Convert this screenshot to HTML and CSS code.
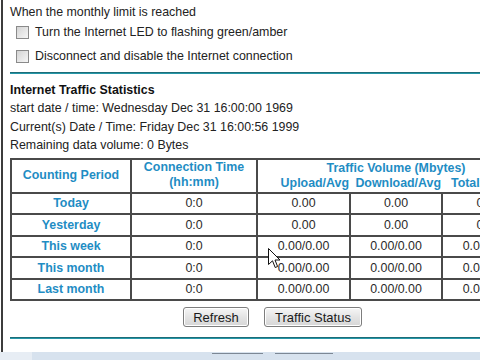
FILE: index.html
```html
<!DOCTYPE html>
<html>
<head>
<meta charset="utf-8">
<link rel="stylesheet" href="styles.css">
</head>
<body>
<div class="page">
  <div class="limit-title">When the monthly limit is reached</div>
  <div class="check-row"><span class="box"></span><span>Turn the Internet LED to flashing green/amber</span></div>
  <div class="check-row"><span class="box"></span><span>Disconnect and disable the Internet connection</span></div>
  <div class="rule"></div>
  <div class="section-title">Internet Traffic Statistics</div>
  <div class="info">start date / time: Wednesday Dec 31 16:00:00 1969</div>
  <div class="info">Current(s) Date / Time: Friday Dec 31 16:00:56 1999</div>
  <div class="info">Remaining data volume: 0 Bytes</div>
  <table class="stats">
    <colgroup>
      <col class="c1"><col class="c2"><col class="c3"><col class="c4"><col class="c5">
    </colgroup>
    <tr class="head1">
      <th rowspan="2" class="hc">Counting Period</th>
      <th rowspan="2" class="hc">Connection Time<br>(hh:mm)</th>
      <th colspan="3" class="tv">Traffic Volume (Mbytes)</th>
    </tr>
    <tr class="head2">
      <th class="sub first">Upload/Avg</th>
      <th class="sub mid">Download/Avg</th>
      <th class="sub last">Total/Avg</th>
    </tr>
    <tr><th>Today</th><td>0:0</td><td>0.00</td><td>0.00</td><td>0.00</td></tr>
    <tr><th>Yesterday</th><td>0:0</td><td>0.00</td><td>0.00</td><td>0.00</td></tr>
    <tr><th>This week</th><td>0:0</td><td>0.00/0.00</td><td>0.00/0.00</td><td>0.00/0.00</td></tr>
    <tr><th>This month</th><td>0:0</td><td>0.00/0.00</td><td>0.00/0.00</td><td>0.00/0.00</td></tr>
    <tr><th>Last month</th><td>0:0</td><td>0.00/0.00</td><td>0.00/0.00</td><td>0.00/0.00</td></tr>
  </table>
  <div class="buttons">
    <button class="btn btn-refresh">Refresh</button>
    <button class="btn btn-status">Traffic Status</button>
  </div>
  <div class="rule rule-bottom"></div>
</div>
<div class="strip">
  <span class="strip-tab"></span>
  <span class="strip-btn strip-btn1"></span>
  <span class="strip-btn strip-btn2"></span>
</div>
<svg class="cursor" width="13" height="21" viewBox="0 0 13 21">
  <path d="M0.5 0.5 L0.5 16.5 L4.5 12.8 L7.2 19.5 L9.6 18.5 L7 12 L12 12 Z" fill="#fff" stroke="#111" stroke-width="1" stroke-linejoin="miter"/>
</svg>
</body>
</html>
```
FILE: styles.css
```css
html, body {
  margin: 0;
  padding: 0;
  width: 480px;
  height: 360px;
  overflow: hidden;
  background: #fff;
}
body {
  font-family: "Liberation Sans", Arial, sans-serif;
  font-size: 12.4px;
  color: #222;
  position: relative;
}
.page {
  margin-left: 1px;
  border-left: 2px solid #3c3c3c;
  padding-left: 7px;
  height: 352px;
  box-sizing: border-box;
  width: 560px;
}
.limit-title {
  padding-top: 4px;
  line-height: 16px;
}
.check-row {
  display: flex;
  align-items: center;
  height: 24px;
  padding-left: 6px;
}
.box {
  width: 11px;
  height: 11px;
  border: 1px solid #8a8a8a;
  background: linear-gradient(135deg, #d4d4d4, #f6f6f6);
  margin-right: 6px;
  flex: none;
}
.rule {
  margin-top: 4px;
  height: 2px;
  background: #2597a8;
  border-top: 1px solid #1d6d78;
  box-sizing: border-box;
}
.section-title {
  margin-top: 7px;
  line-height: 18px;
  font-weight: bold;
  color: #111;
}
.info {
  line-height: 18.5px;
}
.stats {
  margin-top: 3px;
  border-collapse: collapse;
  border: 2px solid #444;
  table-layout: fixed;
  width: 524px;
}
.c1 { width: 120px; }
.c2 { width: 126px; }
.c3 { width: 93px; }
.c4 { width: 92px; }
.c5 { width: 93px; }
.stats th, .stats td {
  border: 2px solid #4a4a4a;
  text-align: center;
  padding: 0;
  height: 19.5px;
  font-size: 12.4px;
}
.stats th {
  color: #1f8dc4;
  font-weight: bold;
}
.stats td {
  color: #2a2a2a;
}
.head1 th { height: 14px; line-height: 15px; }
.head1 .hc { vertical-align: middle; padding-bottom: 1px; }
.head1 .tv { border-bottom: none; padding-top: 1px; vertical-align: bottom; }
.head2 .sub { border-top: none; height: 14px; line-height: 14px; padding-bottom: 2px; vertical-align: top; }
.head2 .first { border-right: none; text-align: right; padding-right: 1px; }
.head2 .mid { border-left: none; border-right: none; text-align: right; padding-right: 1px; }
.head2 .last { border-left: none; text-align: left; padding-left: 9px; }
.buttons {
  display: flex;
  gap: 15px;
  margin-top: 6px;
  padding-left: 173px;
}
.btn {
  font-family: "Liberation Sans", Arial, sans-serif;
  font-size: 13px;
  color: #1a1a1a;
  height: 20px;
  padding: 0;
  border: 1px solid #7d7d7d;
  border-radius: 3px;
  background: linear-gradient(#f6f6f6, #e4e4e4 50%, #d6d6d6);
  box-shadow: inset 0 0 0 1px #fff;
}
.btn-refresh { width: 66px; }
.btn-status { width: 98px; }
.rule-bottom {
  margin-top: 10px;
}
.strip {
  height: 8px;
  background: #d7e2ee;
  display: flex;
  align-items: flex-start;
}
.strip-tab {
  width: 32px;
  height: 8px;
  background: #e7edf4;
}
.strip-btn {
  height: 1px;
  margin-top: 1px;
  background: #7c8794;
}
.strip-btn1 { margin-left: 180px; width: 51px; }
.strip-btn2 { margin-left: 12px; width: 58px; }
.cursor {
  position: absolute;
  left: 268px;
  top: 248px;
}
```
